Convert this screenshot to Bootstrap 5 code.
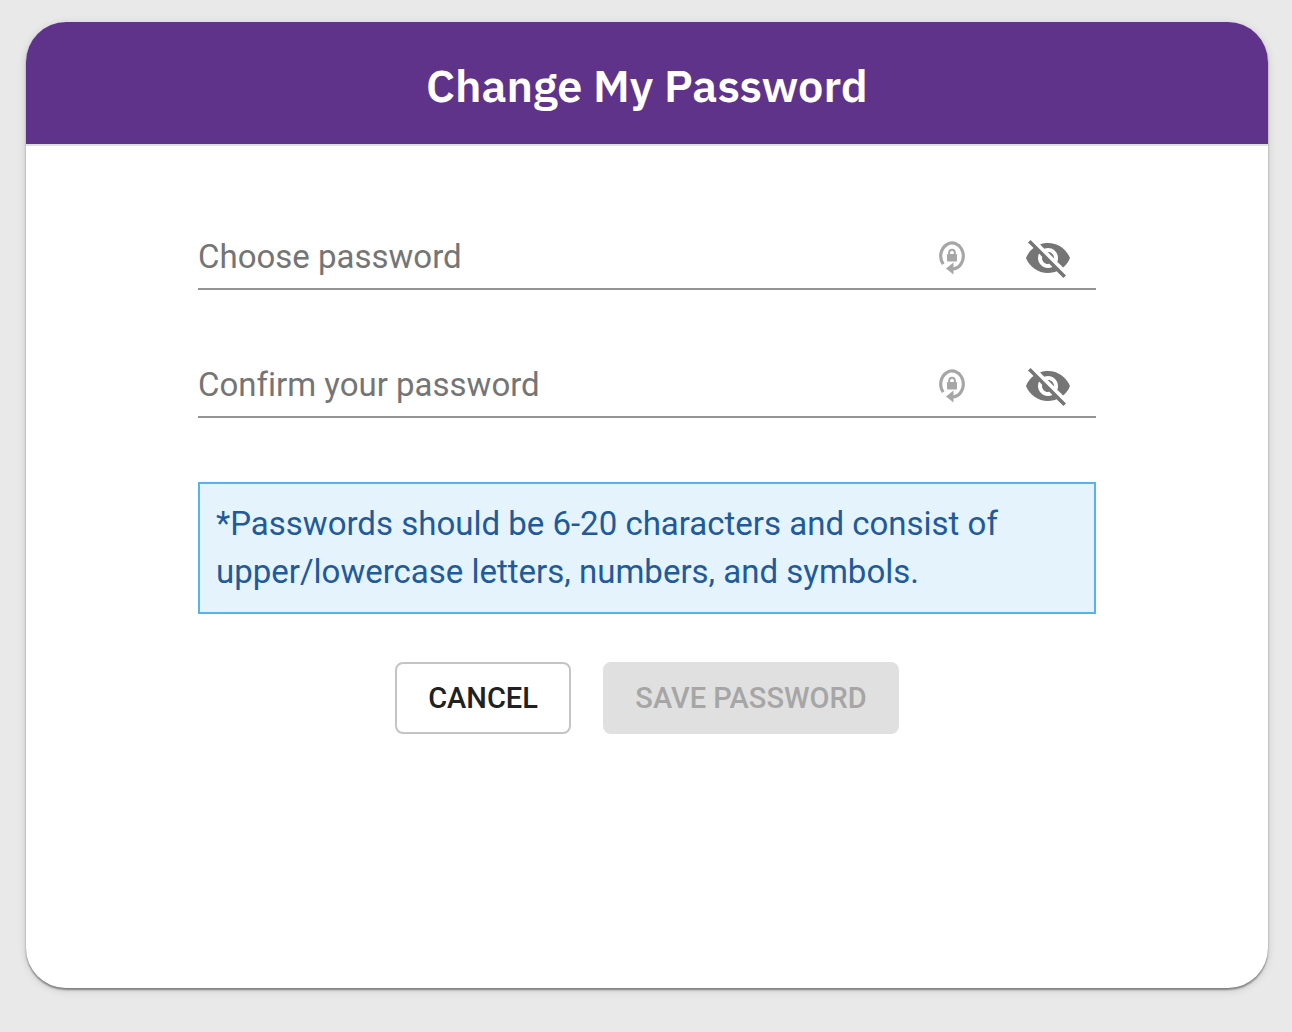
<!DOCTYPE html>
<html lang="en">
<head>
<meta charset="utf-8">
<meta name="viewport" content="width=device-width, initial-scale=1">
<title>Change My Password</title>
<link href="https://cdn.jsdelivr.net/npm/bootstrap@5.3.0/dist/css/bootstrap.min.css" rel="stylesheet">
<style>
  body { background: #e9e9e9; font-family: Roboto, "Liberation Sans", sans-serif; font-size: 33px; line-height: 48px; font-variant-ligatures: none; padding: 22px 24px 42px 26px; }
  .pw-card { min-height: calc(100vh - 66px); border-radius: 40px; box-shadow: 0 2px 2px rgba(0,0,0,.4), 0 2px 8px rgba(0,0,0,.14); }
  .pw-head { background: #5f3389; border-bottom: 2px solid #e0e0e0; padding: 33px 24px 29px; }
  .pw-title { font-family: "IBM Plex Sans", "Noto Sans", sans-serif; font-size: 45px; line-height: 60px; font-weight: 600; }
  .pw-body { width: 100%; max-width: 946px; padding: 82px 24px 48px; }
  .pw-field { border-bottom: 2px solid #949494; margin-bottom: 66px; padding-right: 24px; gap: 56px; }
  .pw-entry { min-width: 0; }
  .pw-entry > * { grid-area: 1 / 1; }
  .pw-input { min-width: 0; height: 60px; font-size: 33px; color: #222; background: transparent; outline: 0; }
  .pw-label { color: #757575; line-height: 58px; pointer-events: none; }
  .pw-input:not(:placeholder-shown) + .pw-label { visibility: hidden; }
  .pw-icon { color: #757575; line-height: 0; }
  .pw-icon-lock { color: #a6a6a6; }
  .pw-note { background: #e5f3fd; border: 2px solid #56b4ec; color: #1f5a9a; padding: 16px; margin: -2px 0 48px; }
  .pw-actions { gap: 32px; }
  .pw-btn { min-height: 72px; border: 2px solid #c4c4c4; border-radius: 8px; font-size: 29px; font-weight: 500; line-height: 40px; padding: 14px 24px; }
  .pw-cancel { min-width: 176px; color: #212121; background: #fff; }
  .pw-save, .pw-save:disabled { min-width: 296px; color: #a6a6a6; background: #e0e0e0; border-color: #e0e0e0; opacity: 1; }
</style>
</head>
<body>
<svg class="d-none" aria-hidden="true">
  <symbol id="lock" viewBox="0 0 32 40">
    <path d="M7.200 26.200A11.300 13 0 1 1 17 31" fill="none" stroke="currentColor" stroke-width="3.200"/>
    <path d="M10 30.500l7.500-6v12z" fill="currentColor"/>
    <rect x="11" y="16" width="10" height="7.500" rx="1" fill="currentColor"/>
    <path d="M13.200 17v-2.500a2.800 2.800 0 0 1 5.600 0V17" fill="none" stroke="currentColor" stroke-width="2"/>
  </symbol>
  <symbol id="eye-off" viewBox="0 0 24 24">
    <path fill="currentColor" d="M12 7c2.760 0 5 2.240 5 5 0 .65-.13 1.260-.36 1.830l2.920 2.920c1.510-1.260 2.700-2.890 3.430-4.750-1.730-4.390-6-7.500-11-7.500-1.400 0-2.740.25-3.980.7l2.160 2.160C10.740 7.130 11.350 7 12 7zM2 4.270l2.280 2.280.46.46C3.080 8.300 1.780 10.020 1 12c1.730 4.390 6 7.500 11 7.500 1.550 0 3.030-.3 4.380-.84l.42.42L19.730 22 21 20.730 3.270 3 2 4.270zM7.530 9.800l1.550 1.550c-.05.21-.08.43-.08.65 0 1.660 1.340 3 3 3 .22 0 .44-.03.65-.08l1.550 1.550c-.67.33-1.410.53-2.200.53-2.760 0-5-2.240-5-5 0-.79.2-1.530.53-2.200zm4.310-.78l3.150 3.150.02-.16c0-1.660-1.340-3-3-3l-.17.01z"/>
  </symbol>
</svg>
<main class="pw-card bg-white overflow-hidden">
  <header class="pw-head text-center text-white">
    <h1 class="pw-title mb-0">Change My Password</h1>
  </header>
  <form class="pw-body mx-auto">
    <div class="pw-field d-flex align-items-center">
      <div class="pw-entry d-grid flex-grow-1">
        <input class="pw-input border-0 p-0" id="choose" type="password" placeholder=" ">
        <label class="pw-label" for="choose">Choose password</label>
      </div>
      <button class="pw-icon pw-icon-lock btn border-0 p-0" type="button" aria-label="Generate password"><svg width="32" height="40"><use href="#lock"/></svg></button>
      <button class="pw-icon btn border-0 p-0" type="button" aria-label="Show password"><svg width="48" height="48"><use href="#eye-off"/></svg></button>
    </div>
    <div class="pw-field d-flex align-items-center">
      <div class="pw-entry d-grid flex-grow-1">
        <input class="pw-input border-0 p-0" id="confirm" type="password" placeholder=" ">
        <label class="pw-label" for="confirm">Confirm your password</label>
      </div>
      <button class="pw-icon pw-icon-lock btn border-0 p-0" type="button" aria-label="Generate password"><svg width="32" height="40"><use href="#lock"/></svg></button>
      <button class="pw-icon btn border-0 p-0" type="button" aria-label="Show password"><svg width="48" height="48"><use href="#eye-off"/></svg></button>
    </div>
    <p class="pw-note">*Passwords should be 6-20 characters and consist of upper/lowercase letters, numbers, and symbols.</p>
    <div class="pw-actions d-flex flex-wrap justify-content-center">
      <button class="pw-btn pw-cancel btn" type="button">CANCEL</button>
      <button class="pw-btn pw-save btn" type="submit" disabled>SAVE PASSWORD</button>
    </div>
  </form>
</main>
<script src="https://cdn.jsdelivr.net/npm/bootstrap@5.3.0/dist/js/bootstrap.bundle.min.js"></script>
</body>
</html>
